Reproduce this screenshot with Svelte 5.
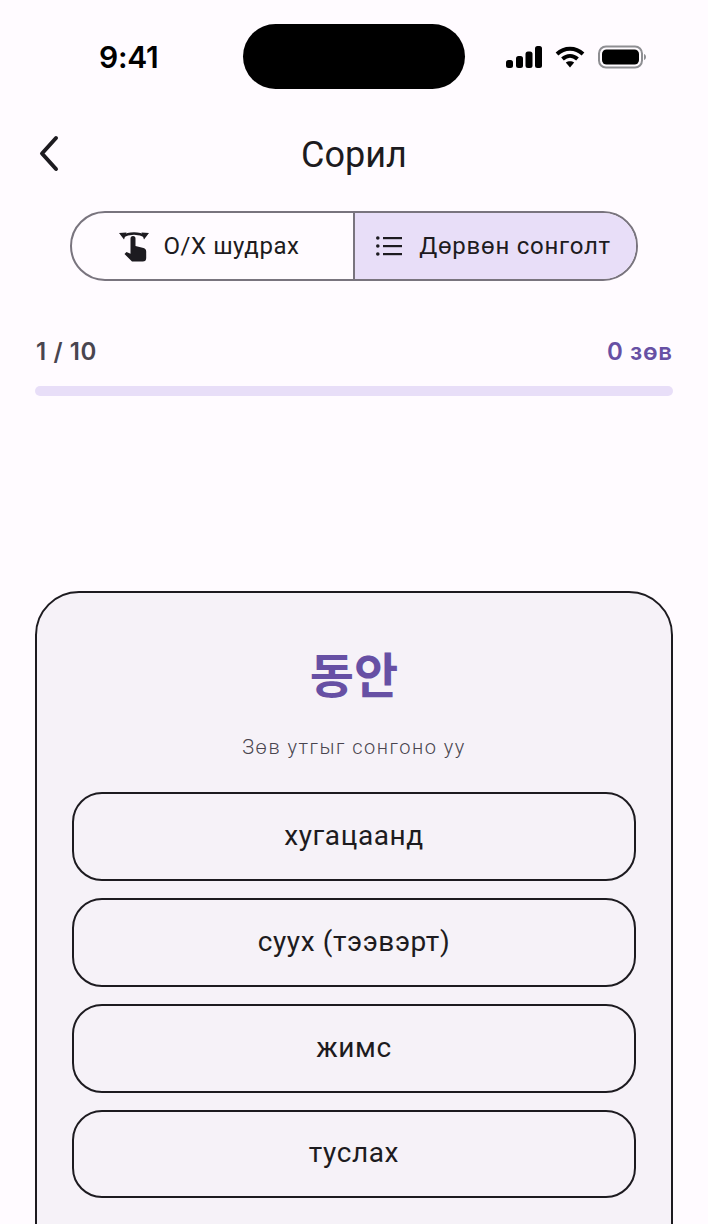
<script>
  const options = ['хугацаанд', 'суух (тээвэрт)', 'жимс', 'туслах'];
</script>

<div class="screen">
  <div class="status">
    <span class="time">9:41</span>
    <div class="island"></div>
    <div class="sys">
      <svg width="36" height="24" viewBox="0 0 36 24"><g fill="#000"><rect x="0" y="15" width="7" height="8" rx="2.5"/><rect x="10" y="11" width="7" height="12" rx="2.5"/><rect x="19.500" y="6.500" width="7" height="16.500" rx="2.500"/><rect x="29" y="1" width="7" height="22" rx="2.500"/></g></svg>
      <svg width="30" height="22" viewBox="0 0 30 22"><g fill="none" stroke="#000" stroke-width="4"><path d="M2 8 C9.500 1 20.500 1 28 8"/><path d="M7.500 13 C12 9 18 9 22.500 13"/></g><path d="M10.800 16.500 C13 14.800 17 14.800 19.200 16.500 L15 21.500 Z" fill="#000"/></svg>
      <svg width="48" height="24" viewBox="0 0 48 24"><rect x="1" y="1.500" width="43" height="21" rx="7" fill="none" stroke="#8e8e92" stroke-width="2"/><rect x="4" y="4.500" width="37" height="15" rx="4.500" fill="#000"/><path d="M46 9 C47.500 9.500 48 11 48 12 C48 13 47.500 14.500 46 15 Z" fill="#8e8e92"/></svg>
    </div>
  </div>

  <div class="nav">
    <svg class="back" width="24" height="38" viewBox="0 0 24 38"><path d="M19 4 L5 19.500 L19 35" fill="none" stroke="#1d1b20" stroke-width="4" stroke-linecap="round" stroke-linejoin="round"/></svg>
    <h1>Сорил</h1>
  </div>

  <div class="segmented">
    <div class="seg first">
      <svg width="30" height="32" viewBox="0 0 30 32">
        <path d="M3.500 6.500 C10 2.500 20 2.500 26.500 6.500" fill="none" stroke="#1d1b20" stroke-width="2.400"/>
        <path d="M0 3 L7.500 2.500 L5 9.500 Z M30 3 L22.500 2.500 L25 9.500 Z" fill="#1d1b20"/>
        <path d="M11.500 8.500 a2.500 2.500 0 0 1 5 0 V16 l8 2 c1.700 .4 2.700 1.700 2.700 3.400 V28 a3.500 3.500 0 0 1 -3.500 3.500 H13 L5.500 24 l2-2 l4 1.800 Z" fill="#1d1b20"/>
      </svg>
      <span>O/X шудрах</span>
    </div>
    <div class="seg active">
      <svg width="26" height="20" viewBox="0 0 26 20">
        <g fill="#1d1b20"><circle cx="1.800" cy="2" r="1.800"/><circle cx="1.800" cy="10" r="1.800"/><circle cx="1.800" cy="18" r="1.800"/><rect x="7" y="1" width="19" height="2.200"/><rect x="7" y="9" width="19" height="2.200"/><rect x="7" y="17" width="19" height="2.200"/></g>
      </svg>
      <span>Дөрвөн сонголт</span>
    </div>
  </div>

  <div class="progress-row">
    <span class="count">1 / 10</span>
    <span class="score">0 зөв</span>
  </div>
  <div class="bar"></div>

  <div class="card">
    <div class="word">동안</div>
    <div class="hint">Зөв утгыг сонгоно уу</div>
    <div class="options">
      {#each options as o}
        <div class="option">{o}</div>
      {/each}
    </div>
  </div>
</div>

<style>
  :global(body) { margin: 0; background: #fffbff; }
  .screen {
    width: 708px; height: 1224px; overflow: hidden; background: #fffbff;
    font-family: Roboto, "Noto Sans", sans-serif; color: #1d1b20;
    display: flex; flex-direction: column; box-sizing: border-box;
  }
  .screen > * { flex: none; }
  .status {
    height: 65px; margin-top: 24px; padding: 0 62px 0 99px;
    display: flex; align-items: center; justify-content: space-between;
  }
  .time { font-family: Inter, sans-serif; font-weight: 600; font-size: 30px; color: #000; width: 144px; letter-spacing: -0.3px; }
  .island { width: 222px; height: 65px; border-radius: 33px; background: #000; }
  .sys { display: flex; align-items: center; gap: 13px; margin-left: auto; }
  .nav {
    height: 48px; margin-top: 42px; padding: 0 38px;
    display: flex; align-items: center; position: relative; justify-content: center;
  }
  .back { position: absolute; left: 37px; top: 3px; }
  h1 { margin: 0; font-size: 36px; font-weight: 400; line-height: 48px; }
  .segmented {
    margin: 32px 70px 0; height: 70.400px; box-sizing: border-box;
    border: 2px solid #79747e; border-radius: 35px; overflow: hidden;
    display: grid; grid-template-columns: 1fr 1fr;
  }
  .seg {
    min-width: 0; box-sizing: border-box; display: flex; align-items: center; justify-content: center; gap: 15px;
    font-size: 24px; font-weight: 450; letter-spacing: 0.55px;
  }
  .seg.first { padding-right: 8px; }
  .seg.active { background: #e8def8; border-left: 2px solid #79747e; margin-left: -1px; gap: 17px; padding-right: 4px; letter-spacing: 0.75px; }
  .progress-row {
    margin: 53.600px 35.500px 0 36px; display: flex; justify-content: space-between; align-items: center;
    font-size: 24px; font-weight: 600; line-height: 34px; font-family: Inter, sans-serif;
    letter-spacing: 0.6px;
  }
  .count { color: #49454f; }
  .score { color: #6750a4; }
  .bar { margin: 17px 35px 0; height: 10.500px; border-radius: 6px; background: #e8def8; }
  .card {
    margin: 194.800px 35px 0; box-sizing: border-box; height: 680px;
    border: 2px solid #1d1b20; border-radius: 44px; background: #f6f2f8;
    padding: 42.700px 35px 0; display: flex; flex-direction: column; align-items: stretch; text-align: center;
  }
  .word {
    font-family: "Noto Sans CJK KR", sans-serif; font-size: 48px; font-weight: 700;
    line-height: 72px; color: #6750a4;
  }
  .hint { margin-top: 25px; font-size: 20px; line-height: 28px; letter-spacing: 1.5px; color: #49454f; font-weight: 350; }
  .options { margin-top: 31.500px; display: flex; flex-direction: column; gap: 17px; }
  .option {
    height: 88.700px; box-sizing: border-box; border: 2px solid #1d1b20; border-radius: 30px;
    display: flex; align-items: center; justify-content: center; padding-bottom: 2px;
    font-size: 28px; font-weight: 450; letter-spacing: 0.6px;
  }
</style>
